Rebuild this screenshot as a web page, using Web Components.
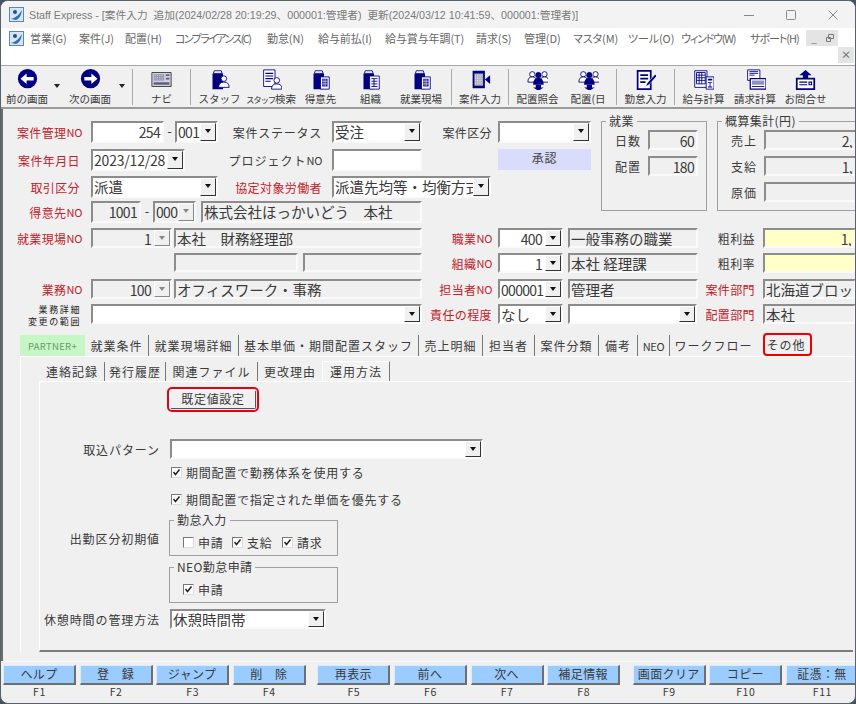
<!DOCTYPE html>
<html lang="ja">
<head>
<meta charset="utf-8">
<title>Staff Express</title>
<style>
  html, body { margin: 0; height: 100%; background: #46525c; overflow: hidden; }
  body { font: 12px "Noto Sans CJK JP", "Liberation Sans", sans-serif; color: #3a3a3a; }
  .no { font-size: 11px; letter-spacing: -.3px; }
</style>
</head>
<body>
<app-shell>
  <win-title>Staff Express - [案件入力&nbsp; 追加(2024/02/28 20:19:29、000001:管理者)&nbsp; 更新(2024/03/12 10:41:59、000001:管理者)]</win-title>
  <menu-bar>
    <m-item style="width:49px">営業(G)</m-item><m-item style="width:46px">案件(J)</m-item><m-item style="width:50px">配置(H)</m-item><m-item style="width:92px;letter-spacing:-1.6px">コンプライアンス(C)</m-item><m-item style="width:51px">勤怠(N)</m-item><m-item style="width:67px">給与前払(I)</m-item><m-item style="width:91px">給与賞与年調(T)</m-item><m-item style="width:48px">請求(S)</m-item><m-item style="width:49px">管理(D)</m-item><m-item style="width:55px">マスタ(M)</m-item><m-item style="width:53px">ツール(O)</m-item><m-item style="width:69px;letter-spacing:-1.2px">ウィンドウ(W)</m-item><m-item style="width:56px;letter-spacing:-1px">サポート(H)</m-item>
  </menu-bar>
  <tool-bar>
    <tool-btn icon="back" style="width:50px;margin-left:1px">前の画面</tool-btn><tool-caret></tool-caret>
    <tool-btn icon="next" style="width:54px">次の画面</tool-btn><tool-caret></tool-caret>
    <tool-sep style="margin-left:4px"></tool-sep>
    <tool-btn icon="navi" style="width:57px">ナビ</tool-btn>
    <tool-sep></tool-sep>
    <tool-btn icon="staff" style="width:53px;margin-left:2px">スタッフ</tool-btn>
    <tool-btn icon="search" style="width:50px"><span style="font-size:8.5px;letter-spacing:-1.2px">スタッフ</span>検索</tool-btn>
    <tool-btn icon="client" style="width:49px">得意先</tool-btn>
    <tool-btn icon="org" style="width:51px">組織</tool-btn>
    <tool-btn icon="client" style="width:50px">就業現場</tool-btn>
    <tool-sep style="margin-left:5px"></tool-sep>
    <tool-btn icon="case" style="width:56px">案件入力</tool-btn>
    <tool-sep></tool-sep>
    <tool-btn icon="people" style="width:53px;margin-left:2px">配置照会</tool-btn>
    <tool-btn icon="people" style="width:48px">配置(日</tool-btn>
    <tool-sep style="margin-left:4px"></tool-sep>
    <tool-btn icon="attend" style="width:57px">勤怠入力</tool-btn>
    <tool-sep></tool-sep>
    <tool-btn icon="calc" style="width:53px;margin-left:2px">給与計算</tool-btn>
    <tool-btn icon="bill" style="width:50px">請求計算</tool-btn>
    <tool-btn icon="ask" style="width:51px">お問合せ</tool-btn>
  </tool-bar>

  <case-form>
    <top-block>
      <div slot="rows">
        <form-row style="height:28px;--h:22px">
          <x-lab red style="width:88px;padding-right:9px">案件管理<span class="no">NO</span></x-lab>
          <x-field num style="width:73px">254</x-field><x-dash style="width:11px">-</x-dash>
          <x-combo num style="width:43px">001</x-combo>
          <x-lab style="width:114px;padding-right:10px;letter-spacing:.75px">案件ステータス</x-lab>
          <x-combo style="width:90px">受注</x-combo>
          <x-lab style="width:76px;padding-right:6px">案件区分</x-lab>
          <x-combo style="width:93px"></x-combo>
        </form-row>
        <form-row style="height:27px;--h:22px">
          <x-lab red style="width:88px;padding-right:11px">案件年月日</x-lab>
          <x-combo num style="width:94px;--ls:-.2px">2023/12/28</x-combo>
          <x-lab style="width:147px;padding-right:10px;letter-spacing:1px">プロジェクト<span class="no">NO</span></x-lab>
          <x-field style="width:90px"></x-field>
          <x-badge style="width:93px;margin-left:76px">承認</x-badge>
        </form-row>
        <form-row style="height:25px;--h:22px">
          <x-lab red style="width:88px;padding-right:11px">取引区分</x-lab>
          <x-combo style="width:127px">派遣</x-combo>
          <x-lab red style="width:114px;padding-right:10px">協定対象労働者</x-lab>
          <x-combo style="width:159px">派遣先均等・均衡方式</x-combo>
        </form-row>
        <form-row style="height:27px;--h:22px">
          <x-lab red style="width:88px;padding-right:9px">得意先<span class="no">NO</span></x-lab>
          <x-field off num style="width:50px">1001</x-field><x-dash style="width:12px">-</x-dash>
          <x-combo off num style="width:43px">000</x-combo>
          <x-field off style="width:221px;margin-left:5px">株式会社ほっかいどう　本社</x-field>
        </form-row>
      </div>
      <x-group slot="sums" title="就業" style="width:106px;height:90px;margin-left:7px">
        <sum-row style="margin-left:13px" label="日数"><x-field off num style="width:50px;height:20px">60</x-field></sum-row>
        <sum-row style="margin-left:13px" label="配置"><x-field off num style="width:50px;height:20px">180</x-field></sum-row>
      </x-group>
      <x-group slot="sums" title="概算集計(円)" style="width:160px;height:90px;margin-left:10px">
        <sum-row style="margin-left:13px" label="売上"><x-field off num style="width:93px;height:20px;--pr:3px">2,</x-field></sum-row>
        <sum-row style="margin-left:13px" label="支給"><x-field off num style="width:93px;height:20px;--pr:3px">1,</x-field></sum-row>
        <sum-row style="margin-left:13px" label="原価"><x-field off num style="width:93px;height:20px"></x-field></sum-row>
      </x-group>
    </top-block>

    <form-row style="height:25px;--h:20px">
      <x-lab red style="width:88px;padding-right:9px">就業現場<span class="no">NO</span></x-lab>
      <x-combo off num rt style="width:81px;margin-right:2px;height:20px">1</x-combo>
      <x-field off style="width:248px;height:20px">本社　財務経理部</x-field>
      <x-lab red style="width:76px;padding-right:6px">職業<span class="no">NO</span></x-lab>
      <x-combo num rt style="width:65px;height:20px">400</x-combo>
      <x-field off style="width:130px;height:20px;margin-left:5px">一般事務の職業</x-field>
      <x-lab style="width:65px;padding-right:8px">粗利益</x-lab>
      <x-field yellow num style="width:93px;height:20px;--pr:3px">1,</x-field>
    </form-row>
    <form-row style="height:26px;--h:20px">
      <x-field off style="width:124px;height:19px;margin-left:171px"></x-field>
      <x-field off style="width:119px;height:19px;margin-left:5px"></x-field>
      <x-lab red style="width:76px;padding-right:6px">組織<span class="no">NO</span></x-lab>
      <x-combo num rt style="width:65px;height:20px">1</x-combo>
      <x-field off style="width:130px;height:20px;margin-left:5px">本社 経理課</x-field>
      <x-lab style="width:65px;padding-right:8px">粗利率</x-lab>
      <x-field yellow style="width:93px;height:20px"></x-field>
    </form-row>
    <form-row style="height:25px;--h:20px">
      <x-lab red style="width:88px;padding-right:9px">業務<span class="no">NO</span></x-lab>
      <x-combo off num rt style="width:81px;margin-right:2px;height:20px">100</x-combo>
      <x-field off style="width:248px;height:20px">オフィスワーク・事務</x-field>
      <x-lab red style="width:76px;padding-right:6px">担当者<span class="no">NO</span></x-lab>
      <x-combo num style="width:65px;height:20px">000001</x-combo>
      <x-field off style="width:130px;height:20px;margin-left:5px">管理者</x-field>
      <x-lab red style="width:65px;padding-right:8px">案件部門</x-lab>
      <x-field off style="width:93px;height:20px">北海道ブロッ</x-field>
    </form-row>
    <form-row style="height:31px;--h:20px">
      <x-lab tiny style="width:88px;padding-right:10px">業務詳細<br>変更の範囲</x-lab>
      <x-combo style="width:331px;height:20px"></x-combo>
      <x-lab red style="width:76px;padding-right:6px">責任の程度</x-lab>
      <x-combo style="width:65px;height:20px">なし</x-combo>
      <x-combo style="width:129px;height:20px;margin-left:5px"></x-combo>
      <x-lab red style="width:66px;padding-right:8px">配置部門</x-lab>
      <x-field off style="width:93px;height:20px">本社</x-field>
    </form-row>

    <tab-bar style="margin-left:17px;height:21px">
      <x-tab partner style="width:65px">PARTNER+</x-tab><x-tab style="width:64px">就業条件</x-tab><x-tab style="width:90px">就業現場詳細</x-tab><x-tab style="width:180px">基本単価・期間配置スタッフ</x-tab><x-tab style="width:64px">売上明細</x-tab><x-tab style="width:52px">担当者</x-tab><x-tab style="width:64px">案件分類</x-tab><x-tab style="width:39px">備考</x-tab><x-tab style="width:32px"><span class="no">NEO</span></x-tab><x-tab plain style="width:93px;padding-right:6px">ワークフロー</x-tab><x-tab mark style="width:49px;padding-right:3px">その他</x-tab>
    </tab-bar>

    <outer-panel>
      <tab-bar style="margin-left:19px;height:19px">
        <x-tab style="width:65px">連絡記録</x-tab><x-tab style="width:61px">発行履歴</x-tab><x-tab style="width:92px">関連ファイル</x-tab><x-tab plain style="width:64px">更改理由</x-tab><x-tab active style="width:68px">運用方法</x-tab>
      </tab-bar>
      <inner-panel>
        <opt-row style="margin-top:8px;height:19px"><x-button>既定値設定</x-button></opt-row>
        <opt-row label="取込パターン" style="margin-top:30px;height:20px"><x-combo style="width:313px;height:20px"></x-combo></opt-row>
        <opt-row style="margin-top:5px;height:14px"><x-check on style="margin-left:1px">期間配置で勤務体系を使用する</x-check></opt-row>
        <opt-row style="margin-top:13px;height:14px"><x-check on style="margin-left:1px">期間配置で指定された単価を優先する</x-check></opt-row>
        <opt-row label="出勤区分初期値" style="margin-top:15px;height:36px">
          <x-group title="勤怠入力" style="width:169px;height:36px;margin-left:-1px">
            <div style="display:flex;padding-top:13px;padding-left:13px">
              <x-check style="width:49px">申請</x-check><x-check on style="width:50px">支給</x-check><x-check on>請求</x-check>
            </div>
          </x-group>
        </opt-row>
        <opt-row style="margin-top:11px;height:36px">
          <x-group title="NEO勤怠申請" style="width:169px;height:36px;margin-left:-1px">
            <div style="display:flex;padding-top:13px;padding-left:13px"><x-check on>申請</x-check></div>
          </x-group>
        </opt-row>
        <opt-row label="休憩時間の管理方法" style="margin-top:6px;height:20px"><x-combo style="width:156px;height:20px">休憩時間帯</x-combo></opt-row>
      </inner-panel>
    </outer-panel>
  </case-form>

  <fn-bar>
    <fn-key k="F1">ヘルプ</fn-key><fn-key k="F2">登　録</fn-key><fn-key k="F3">ジャンプ</fn-key><fn-key k="F4">削　除</fn-key>
    <fn-key k="F5" style="margin-left:8px">再表示</fn-key><fn-key k="F6">前へ</fn-key><fn-key k="F7">次へ</fn-key><fn-key k="F8">補足情報</fn-key>
    <fn-key k="F9" style="margin-left:9px">画面クリア</fn-key><fn-key k="F10">コピー</fn-key><fn-key k="F11">証憑：無</fn-key>
  </fn-bar>
</app-shell>

<script>
const NAVY = '#000080';
const binder = `<path d="M4 5h12v18H4z" fill="${NAVY}"/><path d="M6 2h8l1 3H5z" fill="#fff" stroke="${NAVY}"/>`;
const person = (x, y) => `<circle cx="${x}" cy="${y}" r="3.2" fill="#fff" stroke="${NAVY}"/><path d="M${x - 6} ${y + 10}q0-6 6-6t6 6z" fill="#fff" stroke="${NAVY}"/>`;
const tower = `<path d="M12 9h10v14H12z" fill="#fff" stroke="${NAVY}"/><path d="M14 11h6v9h-6z" fill="${NAVY}"/><path d="M14 14h6M14 17h6M16 11v9M18 11v9" stroke="#fff" stroke-width=".7"/>`;
const trio = `<g fill="#fff" stroke="${NAVY}"><circle cx="6" cy="6" r="3"/><circle cx="20" cy="6" r="3"/><path d="M1 15q0-6 5-6t5 6zM15 15q0-6 5-6t5 6z"/></g><circle cx="13" cy="7" r="4" fill="${NAVY}" stroke="#fff" stroke-width=".7"/><path d="M7 18q0-8 6-8t6 8z" fill="${NAVY}"/><path d="M10 18h6v3h3l-6 4-6-4h3z" fill="${NAVY}"/>`;
const ICONS = {
  back: `<circle cx="12" cy="11" r="11" fill="${NAVY}"/><path d="M19 9v4h-8v4l-7-6 7-6v4z" fill="#fff"/>`,
  next: `<circle cx="12" cy="11" r="11" fill="${NAVY}"/><path d="M5 9v4h8v4l7-6-7-6v4z" fill="#fff"/>`,
  navi: `<path d="M1 4h22v16H1z" fill="#cfd3dc" stroke="#333"/><path d="M3 6h12v7H3z" fill="#8a8fa8"/><path d="M3 7.500h12M3 9.500h12M3 11.500h12" stroke="#e6e6f0" stroke-dasharray="1 1"/><path d="M17 6h4v2h-4zM17 10h4v2h-4z" fill="#5a5f80"/><path d="M3 15h18v3H3z" fill="#5a5f80"/>`,
  staff: binder + person(17, 11),
  search: `<path d="M3 1h13v19H3z" fill="#fff" stroke="${NAVY}"/><path d="M5 5h9M5 8h9M5 11h9M5 14h6" stroke="${NAVY}" stroke-width="1.4"/>` + person(18, 13),
  client: binder + tower,
  org: binder + `<path d="M11 8h11v15H11z" fill="#fff" stroke="${NAVY}"/><path d="M13 11h7M13 14h7M13 17h7M13 20h7" stroke="${NAVY}"/><path d="M16 11v9" stroke="${NAVY}"/>`,
  case: `<path d="M3 2h14v20H3z" fill="${NAVY}"/><path d="M5 5h10v14H5z" fill="#a8a8b8"/><path d="M6 7h8M6 9h8M6 11h8M6 13h8M6 15h8M6 17h8" stroke="#fff" stroke-dasharray="1 1"/><path d="M17 12l6-5v10z" fill="${NAVY}"/>`,
  people: trio,
  attend: `<path d="M3 2h15v21H3z" fill="#fff" stroke="${NAVY}" stroke-width="2"/><path d="M6 7h9M6 11h9M6 15h6" stroke="${NAVY}" stroke-width="2"/><path d="M23 6l-9 10-2 4 4-2 9-10z" fill="${NAVY}" stroke="#fff" stroke-width=".6"/>`,
  calc: `<path d="M2 2h14v19H2z" fill="#fff" stroke="${NAVY}"/><path d="M4 4h10v13H4z" fill="none" stroke="${NAVY}"/><path d="M4 7h10M4 10h10M4 13h10M7 4v13M10 4v13" stroke="${NAVY}"/><path d="M15 9h9v14h-9z" fill="#fff" stroke="${NAVY}"/><path d="M17 11h5v2h-5zM19 15h1v6h-1zM17 15h5v1h-5zM17 20h5v1h-5z" fill="${NAVY}"/>`,
  bill: `<path d="M3 1h14v12H3z" fill="#fff" stroke="${NAVY}"/><path d="M5 3h10M5 5h10M5 7h6" stroke="${NAVY}"/><path d="M6 11h18v12H6z" fill="#fff" stroke="${NAVY}" stroke-width="1.4"/><path d="M8 13h14v5H8z" fill="#8f93b5"/><path d="M8 20h14" stroke="${NAVY}"/>`,
  ask: `<path d="M12 1l7 6h-4v4H9V7H5z" fill="${NAVY}"/><path d="M2 11h20v12H2z" fill="#fff" stroke="${NAVY}" stroke-width="2"/><path d="M5 15h9M5 18h9M16 15h3v3h-3z" stroke="${NAVY}" stroke-width="1.2" fill="none"/>`
};
const logo = `<svg width="15" height="15" viewBox="0 0 15 15"><rect x=".5" y=".5" width="14" height="14" fill="#d8e6f3" stroke="#5a87b0"/><path d="M2 12q6-1 11-9-1 8-6 10z" fill="#2c6fb5"/><circle cx="6" cy="5" r="2" fill="#1d4f94"/></svg>`;

class Base extends HTMLElement {
  constructor() {
    super();
    this.attachShadow({ mode: 'open' });
    this.shadowRoot.innerHTML = `<style>${this.constructor.css}</style>${this.render()}`;
  }
  render() { return '<slot></slot>'; }
}
const define = (name, css, render) => {
  const cls = class extends Base {};
  cls.css = css;
  if (render) cls.prototype.render = render;
  customElements.define(name, cls);
};

define('app-shell', `
  :host { display: flex; flex-direction: column; box-sizing: border-box; height: 704px; background: #f0f0f0;
    border: 1px solid #56626c; border-radius: 8px; overflow: hidden; }
`);

define('win-title', `
  :host { display: flex; align-items: center; height: 27px; flex: none; background: #f3f3f3; color: #7a7a7a;
    font: 10.7px "Liberation Sans", "Noto Sans CJK JP", sans-serif; white-space: nowrap; }
  .ico { margin: 0 5px 0 8px; display: flex; }
  .txt { flex: 1; }
  .cap { width: 42px; display: flex; justify-content: center; }
  .caps { margin-right: 1px; display: flex; }
  svg { display: block; }
`, () => `<span class="ico">${logo}</span><span class="txt"><slot></slot></span>
  <span class="caps">
    <span class="cap"><svg width="10" height="10"><path d="M0 5.500h10" stroke="#888"/></svg></span>
    <span class="cap"><svg width="10" height="10"><rect x=".5" y=".5" width="9" height="9" rx="1" fill="none" stroke="#888"/></svg></span>
    <span class="cap"><svg width="10" height="10"><path d="M.5.5l9 9M9.500.5l-9 9" stroke="#888"/></svg></span>
  </span>`);

define('menu-bar', `
  :host { display: block; position: relative; height: 37px; flex: none; background: #fff; }
  .row { display: flex; align-items: center; height: 20px; padding-left: 8px; }
  .ico { width: 21px; display: flex; }
  .mdi { position: absolute; width: 16px; height: 16px; background: #e4e4e4; color: #777; font-size: 10px; line-height: 16px; text-align: center; }
  svg { display: block; }
`, () => `<div class="row"><span class="ico">${logo}</span><slot></slot></div>
  <span class="mdi" style="left:805px;top:2px">_</span>
  <span class="mdi" style="left:821px;top:2px"><svg width="16" height="16"><path d="M6.500 4.500h5v4h-5zM4.500 7.500h4v4h-4z" fill="#e4e4e4" stroke="#777"/></svg></span>
  <span class="mdi" style="left:837px;top:19px;font-weight:bold">×</span>`);
define('m-item', `
  :host { display: block; flex: none; font-size: 11px; color: #666; white-space: nowrap; font-feature-settings: "palt"; letter-spacing: -.1px; }
`);

define('tool-bar', `
  :host { display: flex; flex: none; box-sizing: border-box; height: 44px; background: #f0f0f0; border-top: 1px solid #a8a8a8; border-bottom: 2px solid #9a9a9a; }
`);
define('tool-btn', `
  :host { display: flex; flex-direction: column; align-items: center; flex: none; box-sizing: border-box; padding-top: 3px; font-size: 10.5px; color: #3a3a3a; white-space: nowrap; }
  svg { display: block; flex: none; }
  .t { margin-top: 1px; line-height: 15px; }
`, function () {
  return `<svg width="21" height="21" viewBox="0 0 24 24">${ICONS[this.getAttribute('icon')]}</svg><span class="t"><slot></slot></span>`;
});
define('tool-caret', `
  :host { display: block; flex: none; width: 11px; position: relative; }
  :host::after { content: ""; position: absolute; left: 2px; top: 18px; border: 3.5px solid transparent; border-top: 4px solid #222; }
`);
define('tool-sep', `
  :host { display: block; flex: none; width: 1px; height: 36px; margin-top: 3px; background: #a9a9a9; }
`);

define('case-form', `
  :host { display: block; flex: 1; min-height: 0; box-sizing: border-box; padding-top: 12px; border-left: 2px solid #6c6c6c; overflow: hidden; }
`);
define('top-block', `
  :host { display: flex; height: 107px; }
  .rows { width: 591px; flex: none; }
  .sums { display: flex; align-items: flex-start; }
`, () => `<div class="rows"><slot name="rows"></slot></div><div class="sums"><slot name="sums"></slot></div>`);
define('form-row', `
  :host { display: flex; align-items: flex-start; }
`);
define('x-lab', `
  :host { display: flex; justify-content: flex-end; align-items: center; flex: none; box-sizing: border-box; height: var(--h, 21px); font-size: 12px; letter-spacing: .4px; color: #3a3a3a; white-space: nowrap; }
  :host([red]) { color: #c4202a; }
  :host([tiny]) { font-size: 9px; line-height: 12px; text-align: right; display: block; height: 24px; letter-spacing: 1.6px; color: #222; }
`);
define('x-dash', `
  :host { display: block; flex: none; height: 21px; line-height: 20px; text-align: center; font-size: 13px; }
`);
const well = `
  :host { display: block; flex: none; box-sizing: border-box; height: 22px; background: #fff; color: #3a3a3a;
    border: 2px solid; border-color: #8c8c8c #fafafa #fafafa #8c8c8c; font-size: 14.5px; line-height: 18px; white-space: nowrap; overflow: hidden; }
  :host([off]) { background: #f0f0f0; }
  :host([yellow]) { background: #ffffc8; }
  .v { padding-left: 1px; display: block; overflow: hidden; }
  :host([num]) .v { text-align: right; padding-right: var(--pr, 2px); letter-spacing: var(--ls, -.7px); font-size: 14px; }
`;
define('x-field', well, () => `<span class="v"><slot></slot></span>`);
define('x-combo', well + `
  .w { display: flex; height: 100%; }
  .v { flex: 1; min-width: 0; }
  .b { flex: none; width: 16px; box-sizing: border-box; background: #f0f0f0; border: 1px solid; border-color: #fff #333 #333 #fff; position: relative; }
  .b::after { content: ""; position: absolute; left: 3.5px; top: 5px; border: 3.5px solid transparent; border-top: 4px solid #111; }
  :host([off]) .b { border-color: #fff #888 #888 #fff; }
  :host([off]) .b::after { border-top-color: #888; }
  :host([num]) .v { text-align: left; }
  :host([rt]) .v { text-align: right; padding-right: 3px; }
`, () => `<div class="w"><span class="v"><slot></slot></span><span class="b"></span></div>`);
define('x-badge', `
  :host { display: block; flex: none; box-sizing: border-box; height: 21px; background: #d9dcfa; color: #444; text-align: center; font-size: 12px; line-height: 18px; letter-spacing: .8px; }
`);
define('x-group', `
  :host { display: block; flex: none; position: relative; box-sizing: border-box; border: 1px solid #a0a0a0; }
  .t { position: absolute; left: 4px; top: -8px; padding: 0 3px; background: #f0f0f0; font-size: 12px; line-height: 14px; letter-spacing: .4px; color: #3a3a3a; white-space: nowrap; }
`, function () {
  return `<span class="t">${this.getAttribute('title')}</span><slot></slot>`;
});
define('sum-row', `
  :host { display: flex; align-items: flex-start; height: 26px; position: relative; top: 8px; }
  .l { width: 33px; font-size: 12px; line-height: 22px; letter-spacing: 1px; flex: none; }
`, function () {
  return `<span class="l">${this.getAttribute('label')}</span><slot></slot>`;
});

define('tab-bar', `
  :host { display: flex; flex: none; }
`);
define('x-tab', `
  :host { display: flex; align-items: center; justify-content: center; flex: none; box-sizing: border-box; height: 100%; border-right: 1.5px solid #777; font-size: 12px; letter-spacing: 1px; color: #3a3a3a; white-space: nowrap; }
  :host([partner]) { background: #c6f6c6; color: #6a9c6a; border: 0; letter-spacing: .3px; font-size: 9.5px; }
  :host([plain]) { border: 0; }
  :host([mark]) { border-radius: 4px; box-shadow: inset 0 0 0 2px #e00; border: 0; height: 23px; margin-top: -2px; }
  :host([active]) { background: #f3f3f3; border-top: 1px solid #fff; border-left: 1px solid #fff; border-right: 1.5px solid #777; height: 20px; position: relative; top: -1px; }
`);
define('outer-panel', `
  :host { display: block; margin-left: 17px; padding-top: 5px; box-sizing: border-box; border-left: 1px solid #fff; border-top: 1px solid #fff; }
`);
define('inner-panel', `
  :host { display: block; margin-left: 18px; box-sizing: border-box; height: 271px; border-left: 1px solid #fff; border-top: 1px solid #fff; border-bottom: 2px solid #7c7c7c; width: 814px; }
`);
define('opt-row', `
  :host { display: grid; grid-template-columns: 130px 1fr; align-items: center; }
  .l { text-align: right; padding-right: 10px; font-size: 12px; letter-spacing: .9px; white-space: nowrap; }
  .c { display: flex; align-items: center; }
`, function () {
  return `<span class="l">${this.getAttribute('label') || ''}</span><div class="c"><slot></slot></div>`;
});
define('x-check', `
  :host { display: flex; align-items: center; flex: none; font-size: 12px; letter-spacing: .75px; color: #3a3a3a; white-space: nowrap; }
  .b { width: 9px; height: 9px; margin-right: 4px; flex: none; background: #fff; border: 1px solid; border-color: #777 #ddd #ddd #777; display: block; }
  svg { display: block; }
`, function () {
  const tick = this.hasAttribute('on') ? `<svg width="9" height="9"><path d="M1.500 4l2 2.500L7.500 1.500" fill="none" stroke="#222" stroke-width="1.500"/></svg>` : '';
  return `<span class="b">${tick}</span><slot></slot>`;
});
define('x-button', `
  :host { display: block; width: 86px; height: 19px; box-sizing: border-box; background: #f0f0f0; border: 1px solid; border-color: #fff #555 #555 #fff; text-align: center; font-size: 12px; line-height: 15px; letter-spacing: .7px; color: #3a3a3a; border-radius: 2px; outline: 2px solid #e60012; outline-offset: 1px; }
`);

define('fn-bar', `
  :host { display: flex; flex: none; height: 42px; box-sizing: border-box; padding: 3px 0 0 2px; gap: 3.6px; border-top: 1px solid #fafafa; overflow: hidden; }
`);
define('fn-key', `
  :host { display: block; flex: none; width: 73px; text-align: center; }
  .k { height: 20px; box-sizing: border-box; background: #9accff; border: 1px solid; border-width: 1px 2px 2px 1px; border-color: #dcecff #6e6e6e #6e6e6e #dcecff; font-size: 12px; line-height: 16px; letter-spacing: .4px; color: #3a3a3a; white-space: nowrap; overflow: hidden; }
  .f { font-size: 10.5px; line-height: 14px; color: #3a3a3a; letter-spacing: .6px; }
`, function () {
  return `<div class="k"><slot></slot></div><div class="f">${this.getAttribute('k')}</div>`;
});
</script>
</body>
</html>
